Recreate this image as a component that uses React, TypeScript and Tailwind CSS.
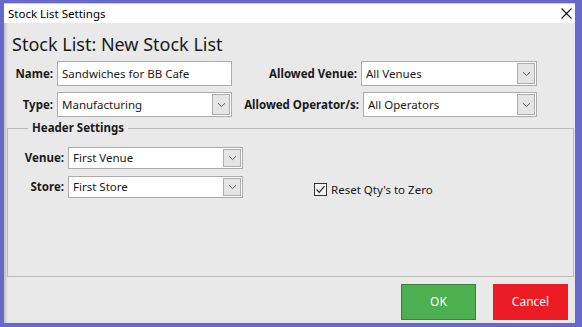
function Chevron() {
  return (
    <svg width="9" height="6" viewBox="0 0 9 6" className="text-[#606060]">
      <path d="M1 1.2 L4.5 4.6 L8 1.2" fill="none" stroke="currentColor" strokeWidth="1" />
    </svg>
  );
}

function Select({ value, className }: { value: string; className: string }) {
  return (
    <div className={`flex items-center bg-white border border-[#acacac] pl-[4px] pr-[1px] ${className}`}>
      <span className="flex-1 truncate">{value}</span>
      <div className="flex items-center justify-center w-[18px] self-stretch my-[1px] bg-[#e5e5e5] border border-[#adadad]">
        <Chevron />
      </div>
    </div>
  );
}

export default function App() {
  return (
    <div
      className="w-[582px] h-[327px] bg-[#6767cc] pl-[4px] pr-[7px] pt-[3px] pb-[4px] flex flex-col text-[11.5px] text-[#1a1a1a]"
      style={{ fontFamily: '"Noto Sans", "Open Sans", sans-serif' }}
    >
      <div className="flex-1 flex flex-col bg-[#e9e9e9] shadow-[inset_3px_0_3px_-1px_rgba(0,0,0,0.18)]">
        {/* title bar */}
        <div className="h-[20px] bg-white border-t border-[#d0d0d0] flex items-center pl-[4px] pr-[3px]">
          <span className="flex-1 text-[11.5px] text-black">Stock List Settings</span>
          <svg width="11" height="11" viewBox="0 0 11 11">
            <path d="M0.5 0.5 L10.5 10.5 M10.5 0.5 L0.5 10.5" stroke="#111" strokeWidth="1.1" />
          </svg>
        </div>

        <div className="pl-[8px] pt-[9px] text-[18px] leading-[24px] text-[#1a1a1a]">Stock List: New Stock List</div>

        <div className="mt-[5px] flex items-center h-[25px]">
          <div className="w-[49px] text-right font-bold mr-[4px]">Name:</div>
          <div className="w-[175px] h-[25px] bg-white border border-[#acacac] flex items-center pl-[4px]">
            Sandwiches for BB Cafe
          </div>
          <div className="w-[125px] text-right font-bold mr-[4px]">Allowed Venue:</div>
          <Select value="All Venues" className="w-[176px] h-[25px]" />
        </div>

        <div className="mt-[6px] flex items-center h-[25px]">
          <div className="w-[49px] text-right font-bold mr-[4px]">Type:</div>
          <Select value="Manufacturing" className="w-[175px] h-[25px]" />
          <div className="w-[127px] text-right font-bold mr-[4px]">Allowed Operator/s:</div>
          <Select value="All Operators" className="w-[174px] h-[25px]" />
        </div>

        <fieldset className="mt-[2px] ml-[3px] mr-[1px] h-[158px] border border-[#bcbcbc] px-0">
          <legend className="ml-[20px] px-[4px] font-bold leading-[18px]">Header Settings</legend>
          <div className="pt-[10px] flex flex-col gap-[7px]">
            <div className="flex items-center h-[22px]">
              <div className="w-[56px] text-right font-bold mr-[4px]">Venue:</div>
              <Select value="First Venue" className="w-[175px] h-[22px]" />
            </div>
            <div className="flex items-center h-[22px]">
              <div className="w-[56px] text-right font-bold mr-[4px]">Store:</div>
              <Select value="First Store" className="w-[175px] h-[22px]" />
              <label className="ml-[71px] mt-[5px] flex items-center gap-[4px]">
                <span className="w-[13px] h-[13px] border border-[#333] bg-[#f4f4f4] flex items-center justify-center">
                  <svg width="11" height="11" viewBox="0 0 11 11">
                    <path d="M1.5 5.5 L4.3 8.3 L9.5 2.2" fill="none" stroke="#222" strokeWidth="1.2" />
                  </svg>
                </span>
                <span>Reset Qty's to Zero</span>
              </label>
            </div>
          </div>
        </fieldset>

        <div className="mt-[7px] flex justify-end gap-[17px] pr-[7px]">
          <button className="w-[75px] h-[36px] bg-[#4caf50] border border-[#3b7d3e] text-white text-[12px]">OK</button>
          <button className="w-[75px] h-[36px] bg-[#ed1c24] text-white text-[12px]">Cancel</button>
        </div>
      </div>
    </div>
  );
}
